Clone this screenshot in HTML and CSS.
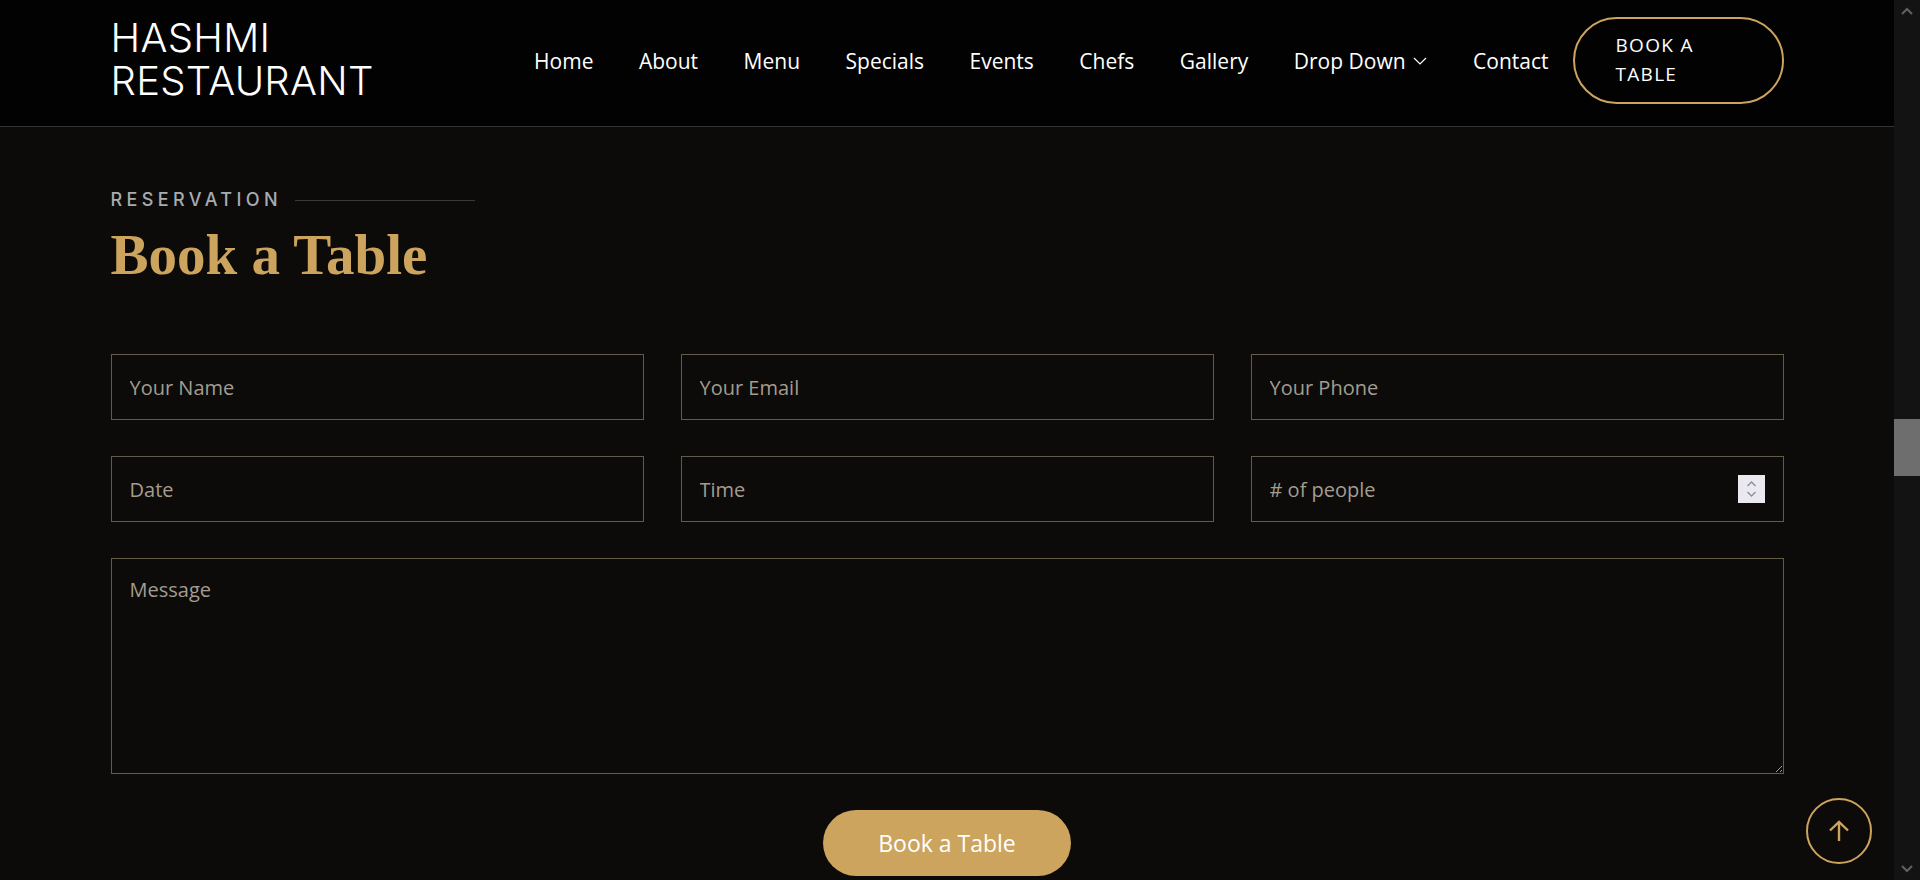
FILE: index.html
```html
<!DOCTYPE html>
<html lang="en">
<head>
<meta charset="utf-8">
<title>Hashmi Restaurant - Book a Table</title>
<link rel="stylesheet" href="styles.css">
</head>
<body>
<div class="window">
  <div class="page">
    <header class="site-header">
      <div class="header-inner">
        <a class="logo" href="#"><span class="logo-line">HASHMI</span><span class="logo-line">RESTAURANT</span></a>
        <div class="header-right">
          <nav class="nav">
            <a href="#">Home</a>
            <a href="#">About</a>
            <a href="#">Menu</a>
            <a href="#">Specials</a>
            <a href="#">Events</a>
            <a href="#">Chefs</a>
            <a href="#">Gallery</a>
            <a href="#" class="dropdown">Drop Down
              <svg class="chev" width="16" height="16" viewBox="0 0 16 16"><polyline points="2,5 8,11 14,5" fill="none" stroke="#fff" stroke-width="1.2"/></svg>
            </a>
            <a href="#">Contact</a>
          </nav>
          <a class="book-btn" href="#">BOOK A TABLE</a>
        </div>
      </div>
    </header>

    <main class="section">
      <div class="container">
        <div class="title-label"><span>RESERVATION</span><i class="title-line"></i></div>
        <h2 class="title">Book a Table</h2>

        <form class="form">
          <div class="grid">
            <input class="field" type="text" placeholder="Your Name">
            <input class="field" type="text" placeholder="Your Email">
            <input class="field" type="text" placeholder="Your Phone">
            <input class="field" type="text" placeholder="Date">
            <input class="field" type="text" placeholder="Time">
            <div class="num-wrap">
              <input class="field" type="text" placeholder="# of people">
              <span class="spinner">
                <svg width="27" height="28" viewBox="0 0 27 28"><polyline points="9.5,11 13.5,7 17.5,11" fill="none" stroke="#8e8e9c" stroke-width="1.4"/><polyline points="9.5,17 13.5,21 17.5,17" fill="none" stroke="#8e8e9c" stroke-width="1.4"/></svg>
              </span>
            </div>
          </div>
          <textarea class="field message" placeholder="Message"></textarea>
          <div class="submit-row"><button type="button" class="submit">Book a Table</button></div>
        </form>
      </div>
    </main>

    <a class="back-top" href="#">
      <svg width="24" height="24" viewBox="0 0 24 24"><line x1="12" y1="22" x2="12" y2="3" stroke="#cda45e" stroke-width="2.4"/><polyline points="3,11.5 12,3 21,11.5" fill="none" stroke="#cda45e" stroke-width="2.4"/></svg>
    </a>
  </div>

  <aside class="scrollbar">
    <span class="sb-arrow"><svg width="14" height="10" viewBox="0 0 14 10"><polyline points="2,8 7,3 12,8" fill="none" stroke="#5f5f5f" stroke-width="2.2"/></svg></span>
    <span class="sb-space-top"></span>
    <span class="sb-thumb"></span>
    <span class="sb-space"></span>
    <span class="sb-arrow"><svg width="14" height="10" viewBox="0 0 14 10"><polyline points="2,2 7,7 12,2" fill="none" stroke="#5f5f5f" stroke-width="2.2"/></svg></span>
  </aside>
</div>
</body>
</html>
```

FILE: styles.css
```css
* { box-sizing: border-box; }

html, body {
  margin: 0;
  padding: 0;
  height: 100%;
  overflow: hidden;
  background: #0c0b09;
}

body {
  font-family: "Open Sans", "Liberation Sans", sans-serif;
  color: #fff;
}

.window {
  display: flex;
  height: 880px;
}

.page {
  flex: 1;
  min-width: 0;
}

/* Header */
.site-header {
  height: 127px;
  background: #020202;
  border-bottom: 1px solid #333333;
}

.header-inner {
  width: 1673px;
  margin: 0 auto;
  height: 126px;
  padding-bottom: 5px;
  display: flex;
  align-items: center;
  justify-content: space-between;
}

.logo {
  display: flex;
  flex-direction: column;
  font-family: "Inter", "Liberation Sans", sans-serif;
  font-weight: 300;
  font-size: 40px;
  letter-spacing: 0.3px;
  color: #fff;
  text-decoration: none;
  margin-top: -4px;
}

.logo-line {
  display: block;
  line-height: 43px;
  height: 43px;
}

.header-right {
  display: flex;
  align-items: center;
}

.nav {
  display: flex;
  align-items: center;
  gap: 45.5px;
}

.nav a {
  color: #fff;
  text-decoration: none;
  font-size: 21px;
  line-height: 28px;
  display: flex;
  align-items: center;
}

.chev { margin-left: 6px; margin-top: 1px; }

.book-btn {
  margin-left: 24px;
  width: 211px;
  height: 87px;
  border: 2px solid #cda45e;
  border-radius: 50px;
  padding: 0 41px;
  display: flex;
  align-items: center;
  color: #fff;
  text-decoration: none;
  font-size: 19px;
  line-height: 29px;
  letter-spacing: 1.3px;
  margin-top: -1px;
}

/* Section */
.section {
  padding-top: 61px;
}

.container {
  width: 1673px;
  margin: 0 auto;
}

.title-label {
  display: flex;
  align-items: center;
  font-family: "Inter", "Liberation Sans", sans-serif;
  font-weight: 500;
  font-size: 18px;
  line-height: 24px;
  letter-spacing: 4.4px;
  color: #a8abb0;
}

.title-line {
  display: block;
  width: 180px;
  height: 1px;
  background: #3d3a35;
  margin-left: 13px;
}

.title {
  margin: 9px 0 0;
  font-family: "Liberation Serif", "DejaVu Serif", serif;
  font-weight: 700;
  font-size: 57px;
  line-height: 67px;
  color: #cda45e;
}

.form {
  margin-top: 66px;
}

.grid {
  display: grid;
  grid-template-columns: repeat(3, 1fr);
  column-gap: 37px;
  row-gap: 36px;
}

.field {
  display: block;
  width: 100%;
  height: 66px;
  background: #0c0b09;
  border: 1px solid #625b4a;
  border-radius: 0;
  padding: 0 18px;
  font-family: "Open Sans", "Liberation Sans", sans-serif;
  font-size: 20px;
  color: #fff;
  outline: none;
}

.field::placeholder { color: #a39d8f; }

.num-wrap { position: relative; }

.spinner {
  position: absolute;
  right: 19px;
  top: 19px;
  width: 27px;
  height: 28px;
  background: #e9e9ef;
  display: block;
}

.spinner svg { display: block; }

.message {
  margin-top: 36px;
  height: 216px;
  padding: 16px 18px;
  line-height: 30px;
  resize: vertical;
}

.submit-row {
  display: flex;
  justify-content: center;
  margin-top: 36px;
}

.submit {
  width: 248px;
  height: 66px;
  border: none;
  border-radius: 50px;
  background: #cda45e;
  color: #fff;
  font-family: "Open Sans", "Liberation Sans", sans-serif;
  font-size: 23px;
  cursor: pointer;
}

/* Back to top */
.back-top {
  position: fixed;
  right: 48px;
  bottom: 16px;
  width: 66px;
  height: 66px;
  border: 2px solid #cda45e;
  border-radius: 50%;
  display: flex;
  align-items: center;
  justify-content: center;
}

/* Fake scrollbar */
.scrollbar {
  width: 26px;
  background: #131313;
  display: flex;
  flex-direction: column;
  align-items: center;
}

.sb-arrow {
  height: 22px;
  display: flex;
  align-items: center;
  justify-content: center;
}

.sb-space-top { height: 397px; }

.sb-thumb {
  width: 26px;
  height: 57px;
  background: #6e6e6e;
}

.sb-space { flex: 1; }
```
